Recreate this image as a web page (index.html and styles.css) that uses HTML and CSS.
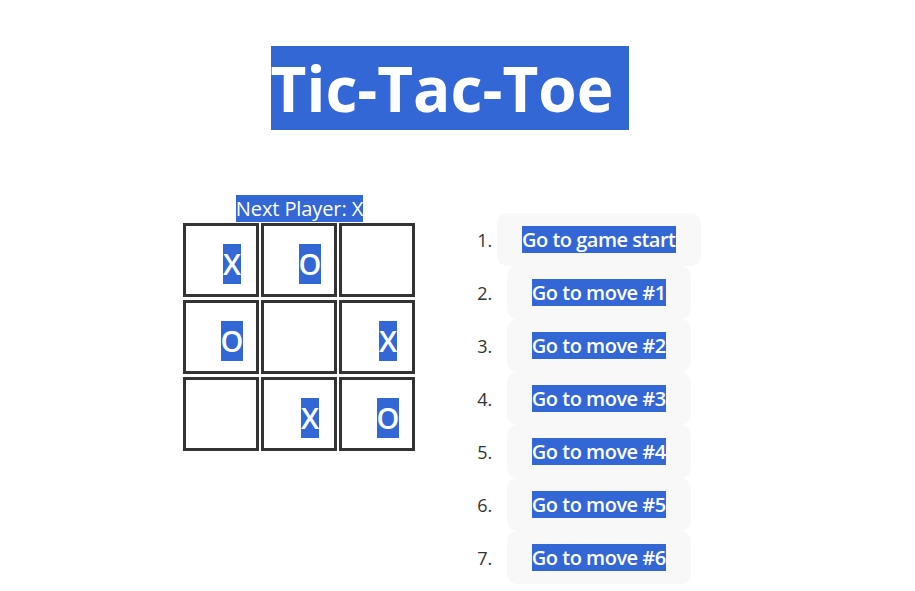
FILE: index.html
```html
<!DOCTYPE html>
<html>
<head>
<meta charset="utf-8">
<link rel="stylesheet" href="styles.css">
</head>
<body>
<div class="page">
  <h1 class="title"><span class="sel">Tic-Tac-Toe&nbsp;</span></h1>
  <div class="game">
    <div class="board-col">
      <div class="status"><span class="sel">Next Player: X</span></div>
      <div class="board">
        <div class="cell"><span class="sel">X</span></div>
        <div class="cell"><span class="sel">O</span></div>
        <div class="cell"></div>
        <div class="cell"><span class="sel">O</span></div>
        <div class="cell"></div>
        <div class="cell"><span class="sel">X</span></div>
        <div class="cell"></div>
        <div class="cell"><span class="sel">X</span></div>
        <div class="cell"><span class="sel">O</span></div>
      </div>
    </div>
    <ol class="moves">
      <li><button class="move"><span class="sel">Go to game start</span></button></li>
      <li><button class="move"><span class="sel">Go to move #1</span></button></li>
      <li><button class="move"><span class="sel">Go to move #2</span></button></li>
      <li><button class="move"><span class="sel">Go to move #3</span></button></li>
      <li><button class="move"><span class="sel">Go to move #4</span></button></li>
      <li><button class="move"><span class="sel">Go to move #5</span></button></li>
      <li><button class="move"><span class="sel">Go to move #6</span></button></li>
    </ol>
  </div>
</div>
</body>
</html>
```
FILE: styles.css
```css
html, body {
  margin: 0;
  padding: 0;
  background: #ffffff;
}
body {
  font-family: "Open Sans", "Noto Sans", sans-serif;
  color: #333333;
}
.page {
  width: 900px;
}
.sel {
  background: #3367d5;
  color: #ffffff;
}
.title {
  margin: 46px 0 0;
  text-align: center;
  font-size: 62px;
  line-height: 84px;
  font-weight: 700;
}
.game {
  display: flex;
  align-items: flex-start;
  margin-top: 64px;
  padding-left: 183px;
}
.board-col {
  width: 233px;
}
.status {
  text-align: center;
  font-size: 20px;
  line-height: 29px;
  height: 29px;
  letter-spacing: -0.1px;
}
.board {
  display: grid;
  grid-template-columns: repeat(3, 76px);
  grid-template-rows: repeat(3, 74px);
  column-gap: 2px;
  row-gap: 3px;
}
.cell {
  box-sizing: border-box;
  border: 3px solid #333333;
  background: #ffffff;
  display: flex;
  align-items: center;
  justify-content: center;
  padding: 8px 0 0 22px;
  font-size: 29px;
  font-weight: 600;
  line-height: 40px;
}
.moves {
  margin: 19px 0 0 41px;
  padding-left: 40px;
  font-size: 18px;
  line-height: 27px;
  color: #333333;
}
.moves li {
  text-align: center;
}
.move {
  font-family: "Open Sans", "Noto Sans", sans-serif;
  font-size: 20px;
  font-weight: 600;
  letter-spacing: -0.5px;
  line-height: 27px;
  padding: 13px 25px;
  border: none;
  border-radius: 10px;
  background: #f8f8f8;
}
```
